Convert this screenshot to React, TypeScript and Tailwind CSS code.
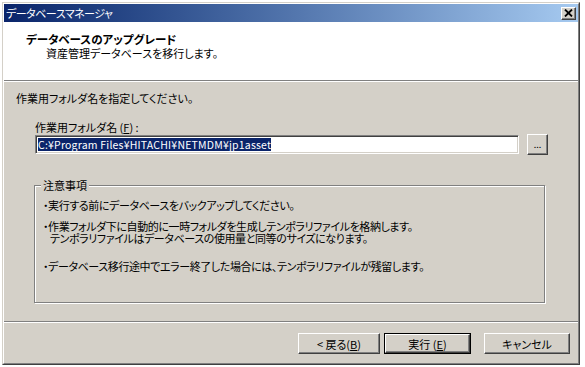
import React from "react"

const raised =
  "border border-t-white border-l-white border-r-[#404040] border-b-[#404040] shadow-[inset_-1px_-1px_0_#808080,inset_1px_1px_0_#d4d0c8]"

function Btn({ children, width, isDefault }: { children: React.ReactNode; width: string; isDefault?: boolean }) {
  if (isDefault) {
    return (
      <div className={`${width} h-[21px] border border-black`}>
        <div className={`h-full w-full ${raised} flex items-center justify-center bg-[#d4d0c8]`}>{children}</div>
      </div>
    )
  }
  return <div className={`${width} h-[21px] ${raised} flex items-center justify-center bg-[#d4d0c8]`}>{children}</div>
}

export default function App() {
  return (
    <div className="w-[585px] h-[367px] bg-white p-[2px] text-[11px] leading-[12px] text-black font-['Noto_Sans_CJK_JP',sans-serif] [font-feature-settings:'palt']">
      {/* window frame */}
      <div className="w-[578px] h-[363px] border border-t-[#d4d0c8] border-l-[#d4d0c8] border-r-[#404040] border-b-[#404040]">
        <div className="h-full w-full border border-t-white border-l-white border-r-[#808080] border-b-[#808080] bg-[#d4d0c8] flex flex-col">
          {/* title bar */}
          <div className="h-[18px] shrink-0 bg-linear-to-r from-[#0a246a] to-[#a6caf0] flex items-center justify-between pl-[2px] pr-[2px]">
            <span className="text-white text-[11px] leading-[14px] tracking-[-0.5px]">データベースマネージャ</span>
            <div className={`w-[15px] h-[13px] ${raised} bg-[#d4d0c8] flex items-center justify-center`}>
              <svg width="9" height="8" viewBox="0 0 9 8">
                <path d="M1 0.5 L8 7.5 M8 0.5 L1 7.5" stroke="black" strokeWidth="1.8" />
              </svg>
            </div>
          </div>

          {/* header */}
          <div className="h-[58px] shrink-0 bg-white pt-[10px]">
            <div className="pl-[22px] font-bold text-[11.5px] leading-[14px]">データベースのアップグレード</div>
            <div className="pl-[42px] leading-[15px]">資産管理データベースを移行します。</div>
          </div>
          <div className="h-px bg-[#808080]" />
          <div className="h-px bg-white" />

          {/* body */}
          <div className="mt-[9px] pl-[12px] leading-[14px]">作業用フォルダ名を指定してください。</div>
          <div className="mt-[15px] pl-[31px] leading-[14px]">
            作業用フォルダ名 (<span className="underline">F</span>) :
          </div>
          <div className="flex items-start pl-[31px]">
            <div className="mt-px w-[484px] h-[19px] bg-white border border-t-[#808080] border-l-[#808080] border-r-white border-b-white shadow-[inset_1px_1px_0_#404040,inset_-1px_-1px_0_#d4d0c8] flex items-center pl-[2px]">
              <span className="bg-[#0a246a] text-white leading-[13px] text-[10.5px] tracking-[0.2px]">C:¥Program Files¥HITACHI¥NETMDM¥jp1asset</span>
            </div>
            <div className={`ml-[8px] w-[21px] h-[21px] ${raised} bg-[#d4d0c8] flex items-center justify-center text-[9px] leading-[9px]`}>
              ...
            </div>
          </div>

          <fieldset className="mt-[23px] ml-[30px] w-[511px] h-[125px] border border-[#808080] shadow-[inset_1px_1px_0_white,1px_1px_0_white] px-[6px]">
            <legend className="px-[2px] bg-[#d4d0c8] leading-[14px]">注意事項</legend>
            <div className="pt-[7px] pl-[2px] tracking-[-0.4px]">
              <div>・実行する前にデータベースをバックアップしてください。</div>
              <div className="mt-[9px]">・作業フォルダ下に自動的に一時フォルダを生成しテンポラリファイルを格納します。</div>
              <div className="pl-[7px]">テンポラリファイルはデータベースの使用量と同等のサイズになります。</div>
              <div className="mt-[16px]">・データベース移行途中でエラー終了した場合には、テンポラリファイルが残留します。</div>
            </div>
          </fieldset>

          <div className="mt-[18px] h-px bg-[#808080]" />
          <div className="h-px bg-white" />

          <div className="mt-[10px] flex justify-end pr-[8px]">
            <Btn width="w-[82px]">
              &lt; 戻る(<span className="underline">B</span>)
            </Btn>
            <div className="w-[4px]" />
            <Btn width="w-[87px]" isDefault>
              実行 (<span className="underline">E</span>)
            </Btn>
            <div className="w-[13px]" />
            <Btn width="w-[86px]">キャンセル</Btn>
          </div>
        </div>
      </div>
    </div>
  )
}
